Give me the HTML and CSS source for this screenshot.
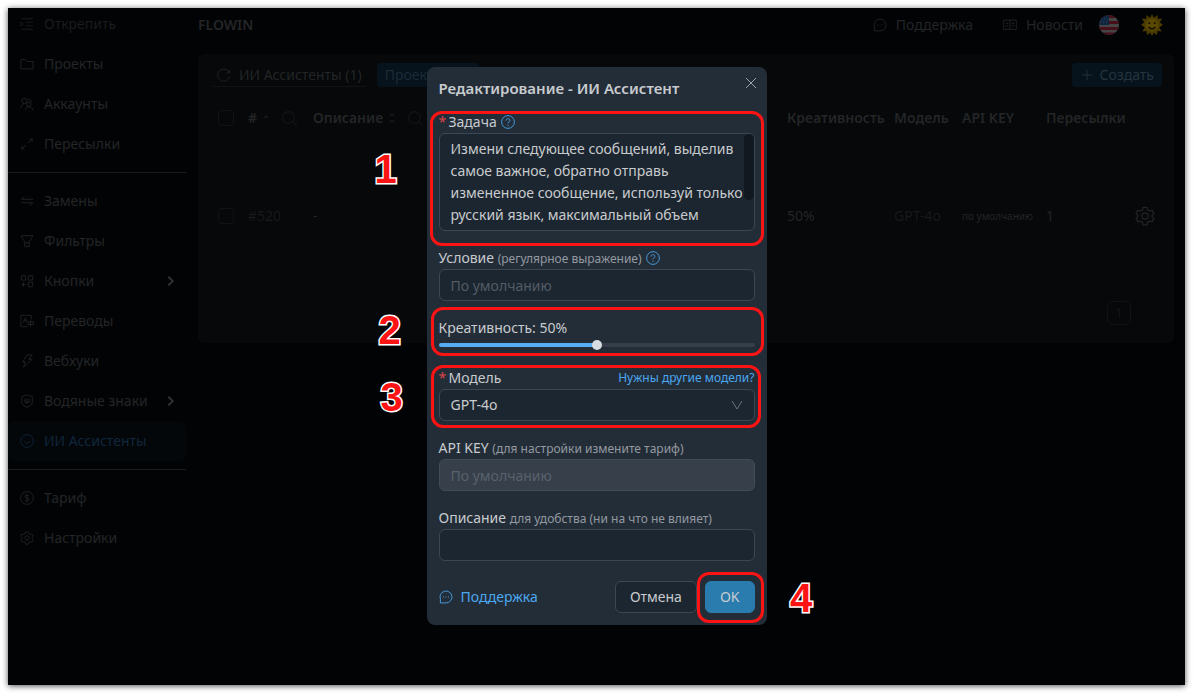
FILE: index.html
```html
<!DOCTYPE html>
<html lang="ru">
<head>
<meta charset="utf-8">
<title>FLOWIN</title>
<link rel="stylesheet" href="styles.css">
</head>
<body>
<svg class="sprite" aria-hidden="true">
  <symbol id="i-chat" viewBox="0 0 16 16"><path d="M1.500 14.800h6.500a6.800 6.800 0 1 0-6.300-4.200z"/><path d="M4.500 8h1.200M7.400 8h1.200M10.300 8h1.200"/></symbol>
  <symbol id="i-help" viewBox="0 0 16 16"><circle cx="8" cy="8" r="7.300"/><path d="M5.800 6.400c0-3 4.400-2.900 4.400 0 0 1.500-2.200 1.500-2.200 3.200M8 11.200v1.300"/></symbol>
  <symbol id="i-gear" viewBox="0 0 16 16"><path d="M6.500 1h3l.5 2 1.700 1 2-.6 1.500 2.600L13.700 7.400v1.300l1.500 1.400-1.500 2.500-2-.5-1.700 1-.5 2h-3l-.5-2-1.700-1-2 .5L.8 10.100l1.500-1.400V7.400L.8 6l1.500-2.600 2 .6L6 3z"/><circle cx="8" cy="8" r="2.500"/></symbol>
  <symbol id="i-search" viewBox="0 0 16 16"><circle cx="7" cy="7" r="5.500"/><path d="m11 11 4 4"/></symbol>
  <symbol id="i-arrow" viewBox="0 0 16 16"><path d="m5 3 5 5-5 5"/></symbol>
</svg>
<div class="screen">
  <nav class="sidebar">
    <button class="item item-top"><svg class="icon" viewBox="0 0 16 16"><path d="M1 2h14M7 6h8M7 10h8M1 14h14M1 5.500v5L4 8z"/></svg>Открепить</button>
    <a class="item" href="#"><svg class="icon" viewBox="0 0 16 16"><path d="M1 3h5l2 2h7v8.500H1z"/></svg>Проекты</a>
    <a class="item" href="#"><svg class="icon" viewBox="0 0 16 16"><circle cx="5" cy="4.500" r="3"/><path d="M1 13c0-3 1.500-5 4-5.500M9.500 2.500c3 0 4 2 3 4"/><circle cx="10" cy="8.500" r="2.500"/><path d="M6 15c.5-5 8-5 8.500 0"/></svg>Аккаунты</a>
    <a class="item" href="#"><svg class="icon" viewBox="0 0 16 16"><path d="M11 2.500h3v3M14 2.500 9 7M5 13.500H2v-3M2 13.500l5-4.500"/></svg>Пересылки</a>
    <hr class="divider">
    <a class="item" href="#"><svg class="icon" viewBox="0 0 16 16"><path d="M15 6H1.500L5 3M1 10h13.500L11 13.500"/></svg>Замены</a>
    <a class="item" href="#"><svg class="icon" viewBox="0 0 16 16"><path d="M1 2h14l-4.500 7v5.500h-5V9zM5.500 10h5"/></svg>Фильтры</a>
    <a class="item" href="#"><svg class="icon" viewBox="0 0 16 16"><path d="M1.500 2h5v5h-5zM9.500 2h5v5h-5zM9.500 9.500h5v5h-5zM4 9.500v5M1.500 12h5"/></svg>Кнопки<svg class="chev" viewBox="0 0 16 16"><use href="#i-arrow"/></svg></a>
    <a class="item" href="#"><svg class="icon" viewBox="0 0 16 16"><path d="M13 6V1.500H1v13h8M3.500 10 6 4.500 8 9M4.500 8H7M9 9h6.500v3H9zM12 7.500V15"/></svg>Переводы</a>
    <a class="item" href="#"><svg class="icon" viewBox="0 0 16 16"><path d="M8 1h6l-4 5h4L4 15l2-6H3z"/></svg>Вебхуки</a>
    <a class="item" href="#"><svg class="icon" viewBox="0 0 16 16"><path d="m8 1 6 2v7c0 2-3 4-6 5.200C5 14 2 12 2 10V3z"/><path d="M5.500 5.500v4h5v-4M8 5v6"/></svg>Водяные знаки<svg class="chev" viewBox="0 0 16 16"><use href="#i-arrow"/></svg></a>
    <a class="item active" href="#"><svg class="icon" viewBox="0 0 16 16"><circle cx="8" cy="8" r="7.300"/><path d="M5 8.500c1 3 5 3 6-.5M10.500 5.500v.8"/></svg>ИИ Ассистенты</a>
    <hr class="divider">
    <a class="item" href="#"><svg class="icon" viewBox="0 0 16 16"><circle cx="8" cy="8" r="7.300"/><path d="M10.500 6C10 4 5.500 4 5.500 6.200 5.500 8.500 10.500 7.500 10.500 9.800 10.500 12 6 12 5.500 10M8 3.500v9"/></svg>Тариф</a>
    <a class="item" href="#"><svg class="icon"><use href="#i-gear"/></svg>Настройки</a>
  </nav>
  <main class="main">
    <header class="topbar">
      <span class="brand">FLOWIN</span>
      <a class="toplink" href="#"><svg class="icon"><use href="#i-chat"/></svg>Поддержка</a>
      <a class="toplink" href="#"><svg class="icon" viewBox="0 0 16 16"><path d="M.8 2.500h14.400v10.500H.8zM8 2.500V13M3 6h3M3 9h3M10 6h3M10 9h3"/></svg>Новости</a>
      <button class="round" aria-label="Язык"><svg class="flag" viewBox="0 0 20 20"><clipPath id="disc"><circle cx="10" cy="10" r="10"/></clipPath><g clip-path="url(#disc)"><path fill="#454545" d="M0 0h20v20H0z"/><path fill="#46101a" d="M0 0h20v3H0zM0 6h20v3H0zM0 12h20v3H0zM0 17.500h20V20H0z"/><path fill="#10253f" d="M0 0h10v10H0z"/><path stroke="#38465a" stroke-dasharray="1 2" d="M2 4h8M1 7h8"/></g></svg></button>
      <button class="round" aria-label="Тема"><svg class="sun" viewBox="0 0 24 24"><path fill="#4a3a00" d="m12 0 2 4 4-3 .3 4.500 4.700-.5-2.500 4L24 12l-4 2.500 2.500 4.500-4.500-.5-.5 4.500-3.500-2.500L12 24l-2-3.500L6.500 23 6 18.500 1.500 19 4 14.500 0 12l3.500-3L1 5l4.700.5L6 1l4 3z"/><circle cx="12" cy="12" r="7" fill="#5a4700"/><path class="face" d="M9 9v2M15 9v2M8.500 14c1.500 3 5.500 3 7 0"/></svg></button>
    </header>
    <section class="card">
      <div class="toolbar">
        <button class="btn-plain"><svg class="icon" viewBox="0 0 16 16"><path d="M14 5A7 7 0 1 0 14.500 10M14.500 2v3.500H11"/></svg>ИИ Ассистенты (1)</button>
        <button class="btn-dark btn-projects">Проекты</button>
        <button class="btn-dark btn-create"><svg class="icon" viewBox="0 0 16 16"><path d="M8 2v12M2 8h12"/></svg>Создать</button>
      </div>
      <table class="table">
        <colgroup><col class="c-check"><col class="c-num"><col class="c-desc"><col><col class="c-cond"><col class="c-creat"><col class="c-model"><col class="c-api"><col class="c-fwd"><col class="c-gear"></colgroup>
        <thead>
          <tr>
            <th><input class="check" type="checkbox" aria-label="Выбрать все"></th>
            <th><div class="head"><span>#</span><svg class="sort" viewBox="0 0 8 14"><path d="m1 7 3-3 3 3z"/></svg><svg class="search"><use href="#i-search"/></svg></div></th>
            <th><div class="head"><span>Описание</span><svg class="sort" viewBox="0 0 8 14"><path d="m1 5 3-3 3 3zM1 9l3 3 3-3z"/></svg><svg class="search"><use href="#i-search"/></svg></div></th>
            <th></th>
            <th>Условие</th>
            <th>Креативность</th>
            <th>Модель</th>
            <th>API KEY</th>
            <th>Пересылки</th>
            <th></th>
          </tr>
        </thead>
        <tbody>
          <tr>
            <td><input class="check" type="checkbox" aria-label="Выбрать #520"></td>
            <td class="dim">#520</td>
            <td>-</td>
            <td></td>
            <td></td>
            <td>50%</td>
            <td class="dim">GPT-4o</td>
            <td class="small">по умолчанию</td>
            <td>1</td>
            <td><button class="gear" aria-label="Настройки"><svg><use href="#i-gear"/></svg></button></td>
          </tr>
        </tbody>
      </table>
      <div class="pager"><button class="page">1</button></div>
    </section>
  </main>

  <form class="modal" role="dialog" aria-labelledby="title">
    <h1 class="title" id="title">Редактирование - ИИ Ассистент</h1>
    <button class="close" type="button" aria-label="Закрыть"><svg viewBox="0 0 12 12"><path d="m1 1 10 10M11 1 1 11"/></svg></button>

    <div class="field mark mark-task">
      <div class="label"><span class="req">*</span><label for="task">Задача</label><svg class="help"><use href="#i-help"/></svg></div>
      <div class="area"><textarea class="control" id="task" rows="4">Измени следующее сообщений, выделив
самое важное, обратно отправь
измененное сообщение, используй только
русский язык, максимальный объем</textarea><span class="thumb"></span></div>
      <span class="num num-1">1</span>
    </div>
    <div class="field">
      <div class="label"><label for="cond">Условие <small>(регулярное выражение)</small></label><svg class="help"><use href="#i-help"/></svg></div>
      <input class="control" id="cond" type="text" placeholder="По умолчанию">
    </div>
    <div class="field mark mark-slider">
      <div class="label"><label for="creat">Креативность: 50%</label></div>
      <input class="slider" id="creat" type="range" min="0" max="100" value="50">
      <span class="num num-2">2</span>
    </div>
    <div class="field mark mark-model">
      <div class="label"><span class="req">*</span><label for="model">Модель</label><a class="more" href="#">Нужны другие модели?</a></div>
      <div class="pick"><select class="control" id="model"><option>GPT-4o</option></select><svg class="caret" viewBox="0 0 12 12"><path d="m1 2 5 8 5-8"/></svg></div>
      <span class="num num-3">3</span>
    </div>
    <div class="field">
      <div class="label"><label for="key">API KEY <small>(для настройки измените тариф)</small></label></div>
      <input class="control" id="key" type="text" placeholder="По умолчанию" disabled>
    </div>
    <div class="field">
      <div class="label"><label for="desc">Описание <small>для удобства (ни на что не влияет)</small></label></div>
      <input class="control" id="desc" type="text">
    </div>
    <div class="footer">
      <a class="support" href="#"><svg class="icon"><use href="#i-chat"/></svg>Поддержка</a>
      <button class="btn" type="button">Отмена</button>
      <div class="mark mark-ok"><button class="btn btn-ok" type="submit">OK</button><span class="num num-4">4</span></div>
    </div>
  </form>
</div>
</body>
</html>
```
FILE: styles.css
```css
* { box-sizing: border-box; }
body {
  margin: 0;
  height: 100vh;
  padding: 8px 9px 9px 8px;
  background: #fff;
  font: 14px/22px "Noto Sans", "Open Sans", sans-serif;
  color: #232527;
}
button, input, select, textarea { font: inherit; color: inherit; margin: 0; }
button { background: none; border: 0; padding: 0; }
a { color: inherit; text-decoration: none; }
svg { fill: none; stroke: currentColor; flex: none; }
.sprite { position: absolute; width: 0; height: 0; }
.icon { width: 14px; height: 14px; }

.screen {
  position: relative;
  display: flex;
  height: 100%;
  background: #020305;
  box-shadow: 0 1px 6px #000000b0;
}

.sidebar { width: 178px; flex: none; }
.item {
  display: flex;
  align-items: center;
  gap: 10px;
  width: 100%;
  height: 40px;
  padding: 0 8px 0 12px;
}
.item-top { height: 36px; padding-bottom: 4px; color: #1a1c1f; }
.item.active { background: #03070a; color: #10263c; border-radius: 6px; }
.chev { width: 14px; height: 14px; margin-left: auto; stroke-width: 2; color: #34373a; }
.divider { margin: 8px 0; border: 0; height: 1px; background: #191b1e; }

.main { flex: 1; min-width: 0; padding: 0 11px 0 12px; }
.topbar { display: flex; align-items: center; height: 34px; }
.brand { font-weight: 600; margin-right: auto; }
.toplink { display: flex; align-items: center; gap: 9px; margin-right: 30px; }
.toplink + .toplink { margin-right: 16px; }
.round { display: flex; margin-right: 22px; }
.round + .round { margin-right: 11px; }
.flag { width: 20px; height: 20px; stroke: none; }
.sun { width: 22px; height: 22px; stroke: none; }
.face { stroke: #191400; stroke-width: 2; }

.card { margin-top: 12px; padding: 9px 12px 18px; background: #060809; border-radius: 6px; }
.toolbar { display: flex; align-items: center; gap: 8px; height: 24px; }
.btn-plain, .btn-dark { display: flex; align-items: center; gap: 8px; height: 24px; border-radius: 4px; }
.btn-plain { padding: 0 7px; border-bottom: 1px solid #101214; }
.btn-dark { padding: 0 8px; background: #06131c; }
.btn-projects { width: 102px; color: #1b2a36; }
.btn-create { margin-left: auto; gap: 6px; color: #24333f; }

.table { width: 100%; table-layout: fixed; border-collapse: collapse; }
.c-check { width: 30px; }
.c-num { width: 65px; }
.c-desc { width: 136px; }
.c-cond { width: 82px; }
.c-creat { width: 107px; }
.c-model { width: 68px; }
.c-api { width: 84px; }
.c-fwd { width: 89px; }
.c-gear { width: 35px; }
th, td { padding: 0 0 0 8px; text-align: left; white-space: nowrap; }
th { height: 62px; font-weight: 600; }
td { height: 134px; }
.head { display: flex; align-items: center; gap: 5px; }
.sort { width: 8px; height: 14px; fill: #141618; stroke: none; }
.search { width: 17px; height: 17px; margin-left: 6px; color: #141618; }
.check { appearance: none; display: block; width: 16px; height: 16px; border: 1px solid #111315; border-radius: 4px; }
.dim { color: #18191b; }
.small { font-size: 10px; }
.gear { display: flex; }
.gear svg { width: 20px; height: 20px; }
.pager { display: flex; justify-content: flex-end; padding: 18px 31px 0 0; }
.page { width: 24px; height: 24px; border: 1px solid #101315; border-radius: 6px; color: #131517; }

.modal {
  position: absolute;
  top: 59px;
  left: 0;
  right: 0;
  width: 340px;
  margin: 0 auto;
  padding: 8px 12px 12px;
  background: #232d38;
  border-radius: 8px;
  color: #c8cbce;
  display: flex;
  flex-direction: column;
  gap: 16px;
}
.title { margin: 0 0 -6px; font-size: 15px; line-height: 26px; font-weight: 600; }
.close { position: absolute; top: 10px; right: 10px; display: flex; color: #9a9fa5; }
.close svg { width: 12px; height: 12px; }
.label { display: flex; align-items: center; height: 22px; }
.label small { font-size: 12px; color: #9499a0; }
.req { width: 10px; color: #dc4446; }
.help { width: 14px; height: 14px; margin-left: 4px; color: #4aa8f0; }
.more { margin-left: auto; font-size: 12px; color: #4aa8f0; }
.control {
  display: block;
  width: 100%;
  height: 32px;
  padding: 4px 11px;
  background: #1c2630;
  border: 1px solid #3b4757;
  border-radius: 6px;
  outline: 0;
}
.control::placeholder { color: #535b64; }
.control:disabled { background: #363f4a; border-color: #414c5a; }
.control:disabled::placeholder { color: #59626c; }
textarea.control { height: auto; resize: none; overflow: hidden; white-space: pre; }
select.control { appearance: none; }
.area, .pick { position: relative; }
.thumb { position: absolute; top: 1px; right: 1px; width: 10px; height: 66px; background: #111820; border-radius: 6px; }
.caret { position: absolute; top: 10px; right: 12px; width: 12px; height: 12px; color: #6b737d; }

.slider { appearance: none; display: block; width: 100%; height: 12px; margin: 0; background: none; }
.slider::-webkit-slider-runnable-track {
  height: 4px;
  border-radius: 2px;
  background: linear-gradient(to right, #56adf2 50%, #363e4b 50%);
}
.slider::-webkit-slider-thumb {
  appearance: none;
  width: 10px;
  height: 10px;
  margin-top: -3px;
  border-radius: 50%;
  background: #d9dce0;
}

.footer { display: flex; align-items: center; gap: 8px; margin-top: 4px; }
.support { display: flex; align-items: center; gap: 8px; margin-right: auto; color: #4aa8f0; }
.btn { height: 32px; padding: 0 14px; border: 1px solid #3b4757; border-radius: 6px; background: #1c2630; }
.btn-ok { background: #2a7cae; border-color: #2a7cae; }

.mark { position: relative; }
.mark::after {
  content: "";
  position: absolute;
  border: 3px solid #fc1414;
  border-radius: 12px;
  pointer-events: none;
}
.mark-task::after { inset: 0 -9px -15px -9px; }
.mark-slider::after { inset: -10px -9px -5px -8px; }
.mark-model::after { inset: -2px -6px -7px -8px; }
.mark-ok::after { inset: -9px -9px -10px -8px; }
.num {
  position: absolute;
  font: bold 40px/40px "Liberation Sans", Arial, sans-serif;
  color: #fc1414;
  -webkit-text-stroke: 3px #fff;
  paint-order: stroke fill;
}
.num-1 { top: 38px; left: -64px; }
.num-2 { top: -7px; left: -60px; }
.num-3 { top: 10px; left: -58px; }
.num-4 { top: -3px; left: 85px; }
```
